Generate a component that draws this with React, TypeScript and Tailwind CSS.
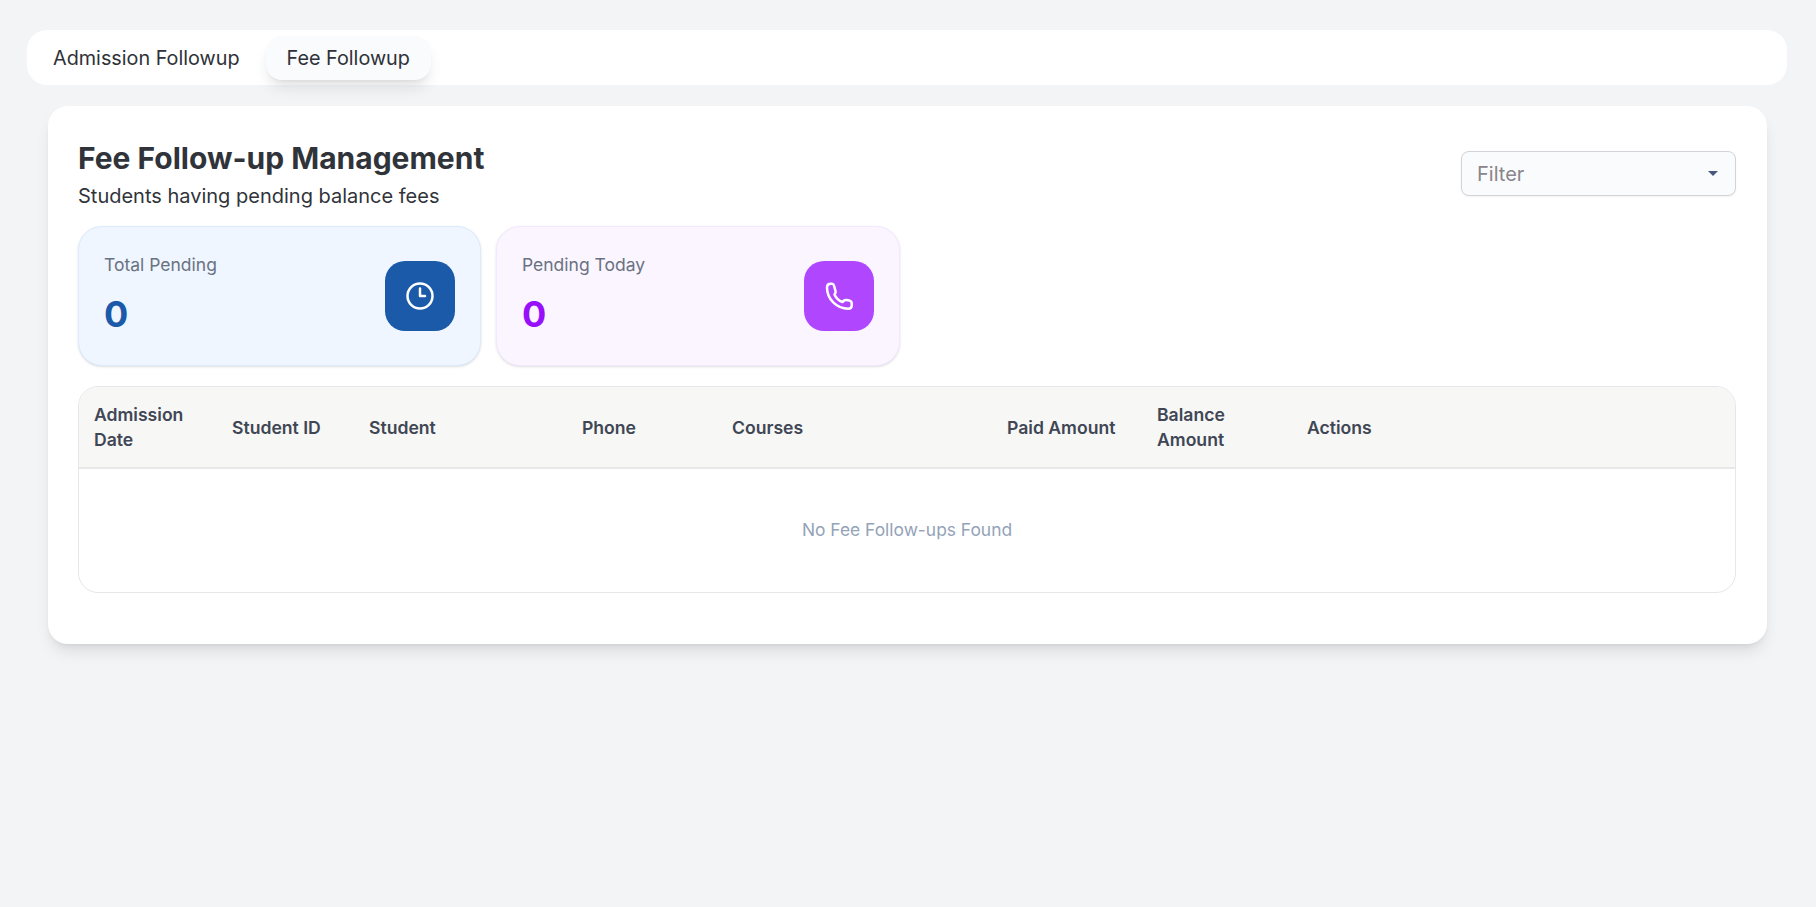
import { Clock3 } from "lucide-react";

const columns = [
    { label: "Admission Date", width: "w-[138px]" },
    { label: "Student ID", width: "w-[137px]" },
    { label: "Student", width: "w-[213px]" },
    { label: "Phone", width: "w-[150px]" },
    { label: "Courses", width: "w-[275px]" },
    { label: "Paid Amount", width: "w-[150px]" },
    { label: "Balance Amount", width: "w-[150px]" },
    { label: "Actions", width: "" },
];

function PhoneIcon() {
    return (
        <svg viewBox="0 0 30 30" className="w-[30px] h-[30px]" fill="none" stroke="white" strokeWidth="2.5" strokeLinejoin="round">
            <path d="M3 6.5C3 4 4.5 2.7 6.5 2.7H8C9 2.7 9.7 3.5 10 4.5L11.6 10.5C11.8 11.5 11.5 12 11 12.7L10.5 13.5C12 17 15 19.8 18.5 21L19.5 20C20.5 19 21.2 18.8 22.3 19L25.5 19.6C27 20 27.7 21 27.7 22.3V24.5C27.7 26.5 26.3 27.7 24.3 27.7C12.5 27.7 3 18 3 6.5Z" />
        </svg>
    );
}

export default function App() {
    return (
        <div className="min-h-[907px] bg-[#f3f4f6] font-['Inter',sans-serif] px-[27px] pt-[30px]">
            <div className="flex items-center gap-[5px] h-[55px] px-[5px] bg-white rounded-[20px] w-[1760px]">
                <button className="h-[44px] px-[21px] pt-[2px] rounded-[16px] text-[19.8px] text-[#2e3238]">Admission Followup</button>
                <button className="h-[44px] px-[21px] pt-[2px] rounded-[16px] text-[19.8px] text-[#2e3238] bg-[#fafbfc] shadow-[0_10px_15px_-3px_rgba(0,0,0,0.1),0_4px_6px_-4px_rgba(0,0,0,0.1)]">Fee Followup</button>
            </div>

            <div className="ml-[21px] mt-[21px] w-[1719px] h-[538px] bg-white rounded-[20px] shadow-[0_10px_15px_-3px_rgba(0,0,0,0.1),0_4px_6px_-4px_rgba(0,0,0,0.1)] pl-[30px] pr-[31px] pt-[34px]">
                <div className="flex justify-between items-start">
                    <div>
                        <h1 className="text-[30px] leading-[36px] font-bold text-[#30343a]">Fee Follow-up Management</h1>
                        <p className="text-[20px] leading-[32px] text-[#30343a] mt-[4px]">Students having pending balance fees</p>
                    </div>
                    <div className="mt-[11px] flex items-center justify-between w-[275px] h-[45px] pl-[15px] pr-[17px] bg-[#fafbfc] border border-[#d1d3d8] rounded-[8px] shadow-xs">
                        <span className="text-[20px] text-[#88858c]">Filter</span>
                        <div className="w-0 h-0 border-x-[5px] border-x-transparent border-t-[5px] border-t-[#47577f]" />
                    </div>
                </div>

                <div className="flex gap-[15px] mt-[14px]">
                    <div className="flex items-center justify-between w-[403px] h-[140px] pl-[25px] pr-[25px] bg-[#eff6ff] border border-[#dbeafe] rounded-[24px] shadow-sm">
                        <div className="pb-[5px]">
                            <p className="text-[17.5px] leading-[24px] text-[#6a7282]">Total Pending</p>
                            <p className="text-[36px] leading-[40px] font-bold text-[#1a5aa9] mt-[17px]">0</p>
                        </div>
                        <div className="flex items-center justify-center w-[70px] h-[70px] rounded-[20px] bg-[#1a5aa9]">
                            <Clock3 className="w-[30px] h-[30px] text-white" />
                        </div>
                    </div>
                    <div className="flex items-center justify-between w-[404px] h-[140px] pl-[25px] pr-[25px] bg-[#faf5ff] border border-[#f3e8ff] rounded-[24px] shadow-sm">
                        <div className="pb-[5px]">
                            <p className="text-[17.5px] leading-[24px] text-[#6a7282]">Pending Today</p>
                            <p className="text-[36px] leading-[40px] font-bold text-[#9810fa] mt-[17px]">0</p>
                        </div>
                        <div className="flex items-center justify-center w-[70px] h-[70px] rounded-[20px] bg-[#b146ff]">
                            <PhoneIcon />
                        </div>
                    </div>
                </div>

                <div className="mt-[20px] border border-[#e5e7eb] rounded-[20px] overflow-hidden">
                    <table className="w-full table-fixed border-collapse">
                        <thead>
                            <tr className="h-[81px] bg-[#f7f7f6] border-b-2 border-[#e8e8e8]">
                                {columns.map((col) => (
                                    <th key={col.label} className={`${col.width} px-[15px] text-left text-[17.6px] leading-[25px] font-semibold text-[#3f4654]`}>
                                        {col.label}
                                    </th>
                                ))}
                            </tr>
                        </thead>
                        <tbody>
                            <tr>
                                <td colSpan={8} className="h-[124px] text-center text-[17.4px] text-[#94a3b8]">
                                    No Fee Follow-ups Found
                                </td>
                            </tr>
                        </tbody>
                    </table>
                </div>
            </div>
        </div>
    );
}
